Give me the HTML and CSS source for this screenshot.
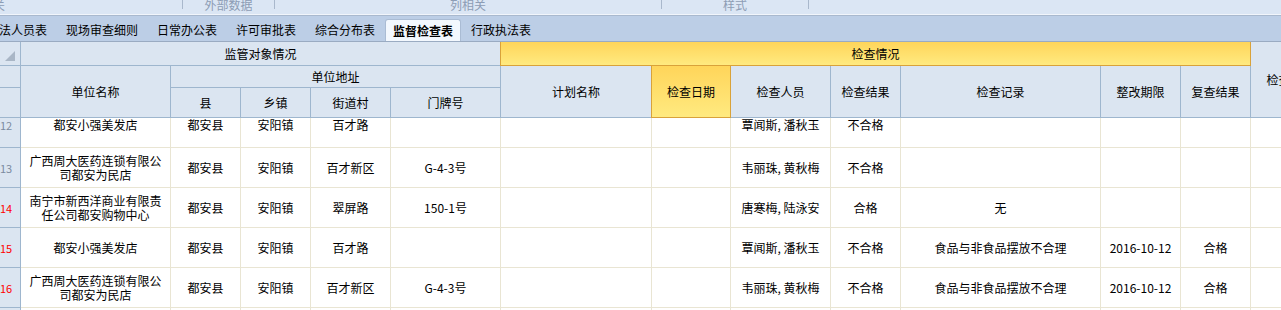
FILE: index.html
```html
<!DOCTYPE html>
<html lang="zh-CN">
<head>
	<meta charset="UTF-8">
	<title>监督检查表</title>
	<link rel="stylesheet" href="styles.css">
</head>
<body>
	<div class="ribbon">
		<div class="group g1"><span>关</span></div>
		<div class="group g2"><span>外部数据</span></div>
		<div class="group g3"><span>列相关</span></div>
		<div class="group g4"><span>样式</span></div>
	</div>
	<div class="tabs">
		<ul class="tab-list">
			<li>执法人员表</li>
			<li>现场审查细则</li>
			<li>日常办公表</li>
			<li>许可审批表</li>
			<li>综合分布表</li>
			<li class="on">监督检查表</li>
			<li>行政执法表</li>
		</ul>
	</div>
	<div class="grid">
		<!-- 表头 -->
		<div class="row head">
			<div class="corner"><i></i></div>
			<div class="s5">监管对象情况</div>
			<div class="s7 hot">检查情况</div>
			<div class="r3">检查依据</div>
		</div>
		<div class="row head">
			<div></div>
			<div class="r2">单位名称</div>
			<div class="s4">单位地址</div>
			<div class="r2">计划名称</div>
			<div class="r2 hot">检查日期</div>
			<div class="r2">检查人员</div>
			<div class="r2">检查结果</div>
			<div class="r2">检查记录</div>
			<div class="r2">整改期限</div>
			<div class="r2">复查结果</div>
		</div>
		<div class="row head">
			<div></div>
			<div>县</div>
			<div>乡镇</div>
			<div>街道村</div>
			<div>门牌号</div>
		</div>
		<!-- 数据 -->
		<div class="row cut">
			<div class="num">12</div>
			<div>都安小强美发店</div><div>都安县</div><div>安阳镇</div><div>百才路</div><div></div>
			<div></div><div></div><div>覃闻斯, 潘秋玉</div><div>不合格</div><div></div><div></div><div></div><div></div>
		</div>
		<div class="row">
			<div class="num">13</div>
			<div>广西周大医药连锁有限公司都安为民店</div><div>都安县</div><div>安阳镇</div><div>百才新区</div><div>G-4-3号</div>
			<div></div><div></div><div>韦丽珠, 黄秋梅</div><div>不合格</div><div></div><div></div><div></div><div></div>
		</div>
		<div class="row">
			<div class="num red">14</div>
			<div>南宁市新西洋商业有限责任公司都安购物中心</div><div>都安县</div><div>安阳镇</div><div>翠屏路</div><div>150-1号</div>
			<div></div><div></div><div>唐寒梅, 陆泳安</div><div>合格</div><div>无</div><div></div><div></div><div></div>
		</div>
		<div class="row">
			<div class="num red">15</div>
			<div>都安小强美发店</div><div>都安县</div><div>安阳镇</div><div>百才路</div><div></div>
			<div></div><div></div><div>覃闻斯, 潘秋玉</div><div>不合格</div><div>食品与非食品摆放不合理</div><div>2016-10-12</div><div>合格</div><div></div>
		</div>
		<div class="row">
			<div class="num red">16</div>
			<div>广西周大医药连锁有限公司都安为民店</div><div>都安县</div><div>安阳镇</div><div>百才新区</div><div>G-4-3号</div>
			<div></div><div></div><div>韦丽珠, 黄秋梅</div><div>不合格</div><div>食品与非食品摆放不合理</div><div>2016-10-12</div><div>合格</div><div></div>
		</div>
		<div class="row">
			<div class="num red">17</div>
			<div></div><div></div><div></div><div></div><div></div>
			<div></div><div></div><div></div><div></div><div></div><div></div><div></div><div></div>
		</div>
	</div>
</body>
</html>
```

FILE: styles.css
```css
* {
	margin: 0;
	padding: 0;
}
li {
	list-style: none;
}
html,body {
	height: 100%;
	overflow: hidden;
}
body {
	background: #fff;
	color: #000;
	font-family: "Noto Sans CJK SC", sans-serif;
	font-size: 12px;
}
.ribbon {
	display: flex;
	align-items: flex-start;
	height: 14px;
	border-bottom: 1px solid #f1f5fb;
	background: #dbe6f4;
	overflow: hidden;
}
.ribbon .group {
	display: flex;
	justify-content: center;
	box-sizing: border-box;
	height: 9px;
	border-right: 1px solid #a9b8cc;
	color: #8d9db5;
	line-height: 9px;
	white-space: nowrap;
}
.ribbon .g1 {
	width: 183px;
	justify-content: flex-start;
}
.ribbon .g1 span {
	margin-left: -7px;
}
.ribbon .g2 {
	width: 92px;
}
.ribbon .g3 {
	width: 387px;
}
.ribbon .g4 {
	width: 147px;
}
.tabs {
	height: 25px;
	border-top: 1px solid #a9b9ce;
	border-bottom: 1px solid #9aabc2;
	background: #bccee6;
	overflow: hidden;
}
.tab-list {
	display: flex;
	align-items: flex-end;
	gap: 1px;
	height: 100%;
	margin-left: -22px;
}
.tab-list li {
	padding: 0 9px;
	line-height: 22px;
	white-space: nowrap;
}
.tab-list li.on {
	padding: 0 7px;
	background: #f3f8fe;
	border: 1px solid #aabcd4;
	border-bottom: none;
	border-radius: 3px 3px 0 0;
	font-weight: bold;
	line-height: 21px;
}
.grid {
	display: grid;
	grid-template-columns: 21px 150px 70px 70px 80px 110px 151px 79px 100px 70px 200px 80px 70px 80px;
	grid-template-rows: 24px 22px 30px 30px;
	grid-auto-rows: 40px;
	width: 1331px;
}
.grid > .row {
	display: contents;
}
.grid > .row > div {
	display: flex;
	align-items: center;
	justify-content: center;
	box-sizing: border-box;
	padding: 0 4px;
	overflow: hidden;
	background: #fff;
	border-right: 1px solid #e9e5d3;
	border-bottom: 1px solid #e9e5d3;
	line-height: 14px;
	text-align: center;
}
.grid > .head > div {
	background: #dbe5f1;
	border-color: #9eb6ce;
	white-space: nowrap;
}
.grid > .head > .hot {
	background: linear-gradient(#ffd55a, #ffea80);
	border-color: #d9a23a;
	box-shadow: -1px 0 #d9a23a;
}
.grid > .cut > div {
	align-items: flex-start;
}
.grid > .row > .num {
	justify-content: flex-start;
	padding: 0;
	background: #dbe5f1;
	border-color: #9eb6ce;
	color: #7b8ba0;
	font-size: 11px;
}
.grid > .row > .red {
	color: #f00;
}
.grid > .head > .corner {
	align-items: flex-end;
	padding-bottom: 4px;
}
.corner i {
	display: block;
	width: 0;
	height: 0;
	border-left: 10px solid transparent;
	border-bottom: 10px solid #a9b6c6;
}
.s4 {
	grid-column: span 4;
}
.s5 {
	grid-column: span 5;
}
.s7 {
	grid-column: span 7;
}
.r2 {
	grid-row: span 2;
}
.r3 {
	grid-row: span 3;
}
```
